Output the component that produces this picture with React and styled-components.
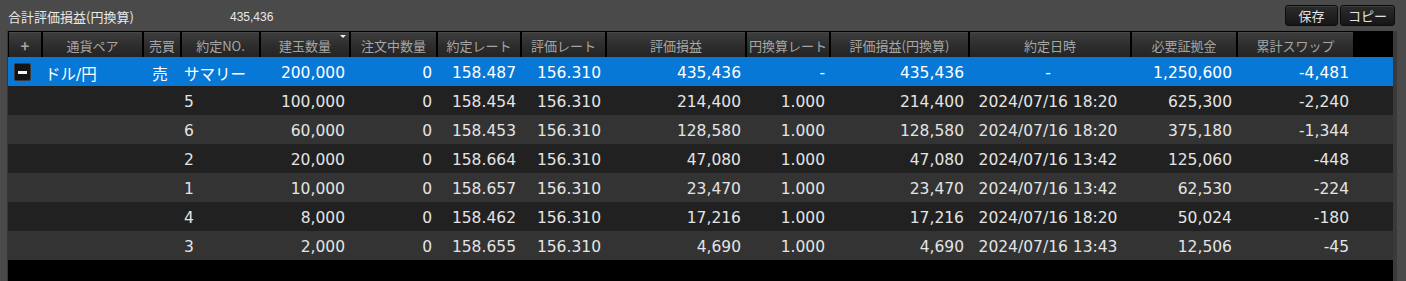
import React from 'react';
import styled, { createGlobalStyle } from 'styled-components';

const GlobalStyle = createGlobalStyle`
  html, body {
    margin: 0;
    padding: 0;
    background: #4a4a4a;
    overflow: hidden;
  }
`;

// column widths of the grid, in px (gap of 2px between them)
const COLS = [32, 99, 36, 77, 88, 85, 82, 83, 138, 82, 137, 160, 104, 115];
const TEMPLATE = COLS.map((c) => `${c}px`).join(' ');

const headers = [
  { label: '+', big: true },
  { label: '通貨ペア' },
  { label: '売買' },
  { label: '約定NO.' },
  { label: '建玉数量', sorted: true },
  { label: '注文中数量' },
  { label: '約定レート' },
  { label: '評価レート' },
  { label: '評価損益' },
  { label: '円換算レート' },
  { label: '評価損益(円換算)' },
  { label: '約定日時' },
  { label: '必要証拠金' },
  { label: '累計スワップ' },
];

const summary = {
  no: 'サマリー',
  qty: '200,000',
  ord: '0',
  rate: '158.487',
  cur: '156.310',
  pl: '435,436',
  conv: '-',
  plj: '435,436',
  date: '-',
  margin: '1,250,600',
  swap: '-4,481',
};

const positions = [
  { no: '5', qty: '100,000', ord: '0', rate: '158.454', cur: '156.310', pl: '214,400', conv: '1.000', plj: '214,400', date: '2024/07/16 18:20', margin: '625,300', swap: '-2,240' },
  { no: '6', qty: '60,000', ord: '0', rate: '158.453', cur: '156.310', pl: '128,580', conv: '1.000', plj: '128,580', date: '2024/07/16 18:20', margin: '375,180', swap: '-1,344' },
  { no: '2', qty: '20,000', ord: '0', rate: '158.664', cur: '156.310', pl: '47,080', conv: '1.000', plj: '47,080', date: '2024/07/16 13:42', margin: '125,060', swap: '-448' },
  { no: '1', qty: '10,000', ord: '0', rate: '158.657', cur: '156.310', pl: '23,470', conv: '1.000', plj: '23,470', date: '2024/07/16 13:42', margin: '62,530', swap: '-224' },
  { no: '4', qty: '8,000', ord: '0', rate: '158.462', cur: '156.310', pl: '17,216', conv: '1.000', plj: '17,216', date: '2024/07/16 18:20', margin: '50,024', swap: '-180' },
  { no: '3', qty: '2,000', ord: '0', rate: '158.655', cur: '156.310', pl: '4,690', conv: '1.000', plj: '4,690', date: '2024/07/16 13:43', margin: '12,506', swap: '-45' },
];

const App = () => {
  const renderCells = (r) => (
    <>
      <Cell $align="left">{r.no}</Cell>
      <Cell>{r.qty}</Cell>
      <Cell>{r.ord}</Cell>
      <Cell>{r.rate}</Cell>
      <Cell>{r.cur}</Cell>
      <Cell>{r.pl}</Cell>
      <Cell>{r.conv}</Cell>
      <Cell>{r.plj}</Cell>
      <Cell $align="center">{r.date}</Cell>
      <Cell>{r.margin}</Cell>
      <Cell>{r.swap}</Cell>
    </>
  );

  return (
    <>
      <GlobalStyle />
      <Page>
        <TopBar>
          <TotalLabel>合計評価損益(円換算)</TotalLabel>
          <TotalValue>435,436</TotalValue>
          <Buttons>
            <ToolButton $w={53}>保存</ToolButton>
            <ToolButton $w={55}>コピー</ToolButton>
          </Buttons>
        </TopBar>

        <Grid>
          <HeaderRow>
            {headers.map((h) => (
              <HeaderCell key={h.label} $big={h.big}>
                {h.label}
                {h.sorted && <SortMark />}
              </HeaderCell>
            ))}
          </HeaderRow>

          <Row $bg="#0878d6" $summary>
            <Cell $align="center">
              <CollapseBox />
            </Cell>
            <Cell $align="left">ドル/円</Cell>
            <Cell $align="center">売</Cell>
            {renderCells(summary)}
          </Row>

          {positions.map((p, i) => (
            <Row key={p.no} $bg={i % 2 === 0 ? '#212121' : '#333333'}>
              <Cell />
              <Cell />
              <Cell />
              {renderCells(p)}
            </Row>
          ))}
        </Grid>
      </Page>
    </>
  );
};

export default App;

const Page = styled.div`
  width: 1406px;
  height: 281px;
  background: #4a4a4a;
  font-family: "Noto Sans CJK JP", sans-serif;
`;

const TopBar = styled.div`
  display: flex;
  align-items: center;
  height: 31px;
  padding: 0 11px 0 8px;
  box-sizing: border-box;
`;

const TotalLabel = styled.span`
  width: 222px;
  font-size: 13px;
  color: #e8e8e8;
  padding-top: 2px;
`;

const TotalValue = styled.span`
  font-family: "Liberation Sans", sans-serif;
  font-size: 12px;
  color: #e8e8e8;
  padding-top: 2px;
`;

const Buttons = styled.div`
  display: flex;
  gap: 2px;
  margin-left: auto;
  margin-top: -1px;
`;

const ToolButton = styled.button`
  width: ${(p) => p.$w}px;
  height: 21px;
  padding: 0;
  border: 1px solid #0c0c0c;
  border-radius: 3px;
  background: linear-gradient(#2c2c2c, #161616);
  box-shadow: inset 0 1px 0 #3c3c3c;
  color: #e2e2e2;
  font-family: "Noto Sans CJK JP", sans-serif;
  font-size: 13px;
  line-height: 19px;
`;

const Grid = styled.div`
  width: 1390px;
  height: 250px;
  margin-left: 7px;
  border-left: 1px solid #363636;
  border-right: 4px solid #3a3a3a;
  box-sizing: border-box;
  background: #000;
  padding-top: 1px;
`;

const HeaderRow = styled.div`
  display: grid;
  grid-template-columns: ${TEMPLATE};
  column-gap: 2px;
  height: 25px;
  padding-left: 1px;
`;

const HeaderCell = styled.div`
  position: relative;
  display: flex;
  align-items: center;
  justify-content: center;
  background: linear-gradient(#3e3e3e, #2d2d2d 55%, #242424);
  box-shadow: inset 0 1px 0 #484848;
  color: #a6a6a6;
  font-size: ${(p) => (p.$big ? 15 : 13)}px;
  font-weight: ${(p) => (p.$big ? 700 : 400)};
  white-space: nowrap;
  padding-top: 1px;
`;

const SortMark = styled.span`
  position: absolute;
  top: 3px;
  right: 3px;
  width: 0;
  height: 0;
  border-left: 3px solid transparent;
  border-right: 3px solid transparent;
  border-top: 3px solid #f0f0f0;
`;

const Row = styled.div`
  display: grid;
  grid-template-columns: ${TEMPLATE};
  column-gap: 2px;
  height: 29px;
  padding-left: 1px;
  background: ${(p) => p.$bg};
  color: ${(p) => (p.$summary ? '#ffffff' : '#e4e4e4')};
  font-family: "DejaVu Sans", "Noto Sans CJK JP", sans-serif;
  font-size: 15.5px;
`;

const Cell = styled.div`
  display: flex;
  align-items: center;
  justify-content: ${(p) =>
    p.$align === 'left' ? 'flex-start' : p.$align === 'center' ? 'center' : 'flex-end'};
  padding: 3px ${(p) => (p.$align === 'left' ? 0 : 4)}px 0 ${(p) => (p.$align === 'left' ? 2 : 0)}px;
  white-space: nowrap;
  overflow: hidden;
`;

const CollapseBox = styled.span`
  position: relative;
  width: 17px;
  height: 18px;
  margin: -2px 1px 0 0;
  box-sizing: border-box;
  background: #141414;
  border: 1px solid #3c3c3c;
  border-radius: 2px;

  &::after {
    content: '';
    position: absolute;
    left: 3px;
    right: 3px;
    top: 7px;
    height: 3px;
    background: #f4f4f4;
  }
`;
